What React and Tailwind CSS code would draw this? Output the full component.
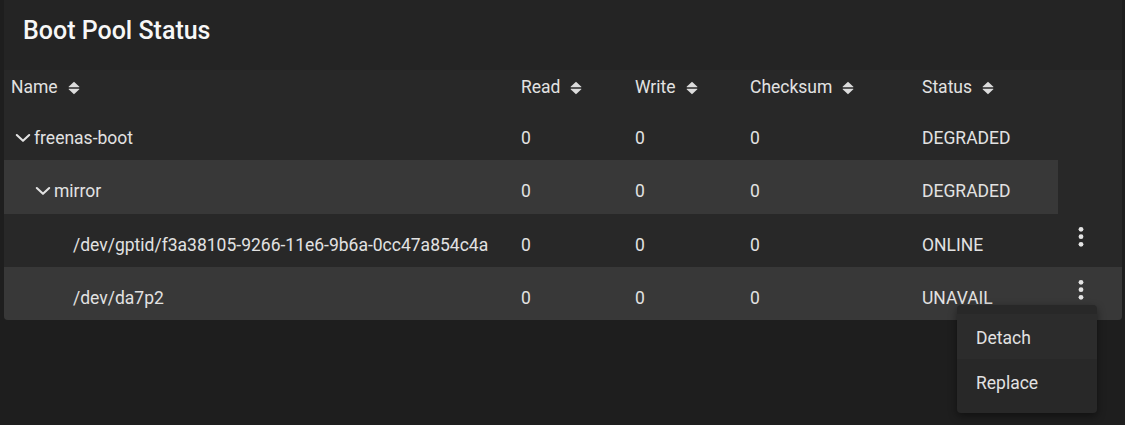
import React from "react";

const cols = "grid grid-cols-[517px_114px_115px_172px_136px_1fr]";

function SortIcon() {
  return (
    <svg width="12" height="14" viewBox="0 0 12 14" className="ml-[10px] shrink-0" fill="#dcdcdc">
      <path d="M6 0.8 L11.4 5.8 Q11.6 6.2 11.2 6.2 H0.8 Q0.4 6.2 0.6 5.8 Z" />
      <path d="M0.8 7.8 H11.2 Q11.6 7.8 11.4 8.2 L6 13.2 L0.6 8.2 Q0.4 7.8 0.8 7.8 Z" />
    </svg>
  );
}

function Chevron() {
  return (
    <svg width="16" height="10" viewBox="0 0 16 10" className="shrink-0">
      <path d="M1.8 2 L8 7.8 L14.2 2" fill="none" stroke="#e2e2e2" strokeWidth="2.1" strokeLinecap="round" strokeLinejoin="round" />
    </svg>
  );
}

function Kebab() {
  return (
    <svg width="10" height="22" viewBox="0 0 10 22" fill="#e4e4e4">
      <circle cx="5" cy="3.3" r="2.4" />
      <circle cx="5" cy="10.7" r="2.4" />
      <circle cx="5" cy="18.3" r="2.4" />
    </svg>
  );
}

const rows = [
  { name: "freenas-boot", level: 0, status: "DEGRADED", hl: "none" },
  { name: "mirror", level: 1, status: "DEGRADED", hl: "partial" },
  { name: "/dev/gptid/f3a38105-9266-11e6-9b6a-0cc47a854c4a", level: 2, status: "ONLINE", hl: "none", actions: true },
  { name: "/dev/da7p2", level: 2, status: "UNAVAIL", hl: "full", actions: true, open: true },
];

function NameCell({ row }) {
  if (row.level === 0)
    return (
      <div className="flex items-start pl-[11px]">
        <span className="mt-[5px] mr-[3px]"><Chevron /></span>
        <span>{row.name}</span>
      </div>
    );
  if (row.level === 1)
    return (
      <div className="flex items-start pl-[31px]">
        <span className="mt-[5px] mr-[3px]"><Chevron /></span>
        <span>{row.name}</span>
      </div>
    );
  return <div className="pl-[69px]">{row.name}</div>;
}

export default function App() {
  return (
    <div className="min-h-[425px] w-full bg-[#1e1e1e] font-[Roboto,sans-serif] text-[17.5px] text-[#e2e2e2]">
      <div className="ml-[4px] w-[1118px] bg-[#242424] rounded-b-[4px]">
        {/* --- Title --- */}
        <div className="h-[70px] pt-[16px] pl-[19px]">
          <h2 className="text-[25px] leading-[30px] font-medium text-[#f7f7f7]">Boot Pool Status</h2>
        </div>

        {/* --- Table --- */}
        <div className="bg-[#282828] rounded-b-[4px]">
          <div className={`${cols} items-start h-[37px] pt-[7px] leading-[21px]`}>
            <div className="flex items-center h-[21px] pl-[7px]">Name <SortIcon /></div>
            <div className="flex items-center h-[21px]">Read <SortIcon /></div>
            <div className="flex items-center h-[21px]">Write <SortIcon /></div>
            <div className="flex items-center h-[21px]">Checksum <SortIcon /></div>
            <div className="flex items-center h-[21px]">Status <SortIcon /></div>
            <div></div>
          </div>

          {rows.map((row, i) => {
            const cell = row.hl === "partial" ? "bg-[#383838]" : "";
            return (
              <div
                key={i}
                className={`${cols} h-[53.33px] leading-[21px] ${row.hl === "full" ? "bg-[#383838] rounded-b-[4px]" : ""}`}
              >
                <div className={`pt-[21px] ${cell}`}><NameCell row={row} /></div>
                <div className={`pt-[21px] ${cell}`}>0</div>
                <div className={`pt-[21px] ${cell}`}>0</div>
                <div className={`pt-[21px] ${cell}`}>0</div>
                <div className={`pt-[21px] ${cell}`}>{row.status}</div>
                <div className="relative">
                  {row.actions && (
                    <div className="pl-[18px] pt-[12px]">
                      <Kebab />
                    </div>
                  )}
                  {row.open && (
                    <div className="absolute left-[-101px] top-[38px] z-10 w-[140px] rounded-[4px] bg-[#282828] py-[9px] shadow-[0_3px_8px_rgba(0,0,0,0.45)]">
                      <div className="h-[45px] bg-[#2c2c2c] px-[19px] pt-[14px] leading-[21px]">Detach</div>
                      <div className="h-[45px] px-[19px] pt-[14px] leading-[21px]">Replace</div>
                    </div>
                  )}
                </div>
              </div>
            );
          })}
        </div>
      </div>
    </div>
  );
}
